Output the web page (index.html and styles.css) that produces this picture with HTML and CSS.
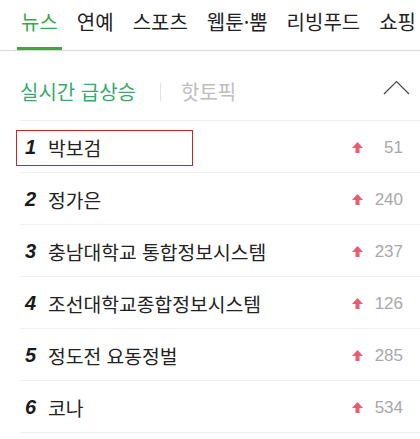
FILE: index.html
```html
<!DOCTYPE html>
<html lang="ko">
<head>
<meta charset="utf-8">
<link rel="stylesheet" href="styles.css">
</head>
<body>
<nav class="tabs">
  <span class="tab active">뉴스</span>
  <span class="tab">연예</span>
  <span class="tab">스포츠</span>
  <span class="tab">웹툰·뿜</span>
  <span class="tab">리빙푸드</span>
  <span class="tab">쇼핑</span>
</nav>
<section class="panel">
  <header class="panel-head">
    <span class="head-on">실시간 급상승</span>
    <span class="head-sep"></span>
    <span class="head-off">핫토픽</span>
    <svg class="chevron" width="28" height="15" viewBox="0 0 28 15"><polyline points="1,14 13.5,1.5 26,14" fill="none" stroke="#444" stroke-width="1.2"/></svg>
  </header>
  <ol class="rank-list">
    <li class="row first"><span class="rank">1</span><span class="name">박보검</span><svg class="up" width="11" height="11" viewBox="0 0 11 11"><polygon points="5.5,0 11,6 7.5,6 7.5,11 3.5,11 3.5,6 0,6"/></svg><span class="count">51</span><span class="highlight"></span></li>
    <li class="row"><span class="rank">2</span><span class="name">정가은</span><svg class="up" width="11" height="11" viewBox="0 0 11 11"><polygon points="5.5,0 11,6 7.5,6 7.5,11 3.5,11 3.5,6 0,6"/></svg><span class="count">240</span></li>
    <li class="row"><span class="rank">3</span><span class="name">충남대학교 통합정보시스템</span><svg class="up" width="11" height="11" viewBox="0 0 11 11"><polygon points="5.5,0 11,6 7.5,6 7.5,11 3.5,11 3.5,6 0,6"/></svg><span class="count">237</span></li>
    <li class="row"><span class="rank">4</span><span class="name">조선대학교종합정보시스템</span><svg class="up" width="11" height="11" viewBox="0 0 11 11"><polygon points="5.5,0 11,6 7.5,6 7.5,11 3.5,11 3.5,6 0,6"/></svg><span class="count">126</span></li>
    <li class="row"><span class="rank">5</span><span class="name">정도전 요동정벌</span><svg class="up" width="11" height="11" viewBox="0 0 11 11"><polygon points="5.5,0 11,6 7.5,6 7.5,11 3.5,11 3.5,6 0,6"/></svg><span class="count">285</span></li>
    <li class="row"><span class="rank">6</span><span class="name">코나</span><svg class="up" width="11" height="11" viewBox="0 0 11 11"><polygon points="5.5,0 11,6 7.5,6 7.5,11 3.5,11 3.5,6 0,6"/></svg><span class="count">534</span></li>
  </ol>
</section>
</body>
</html>
```
FILE: styles.css
```css
html, body {
  margin: 0;
  padding: 0;
  background: #fff;
  font-family: "Noto Sans CJK KR", "Noto Sans", sans-serif;
  overflow: hidden;
}
.tabs {
  display: flex;
  gap: 11px;
  padding-left: 17px;
  height: 50px;
  border-bottom: 1px solid #d6d6d6;
  white-space: nowrap;
  overflow: hidden;
}
.tab {
  padding: 0 4px;
  font-size: 20px;
  line-height: 44px;
  color: #222;
  border-bottom: 3px solid transparent;
  height: 47px;
}
.tab.active {
  color: #3aa844;
  border-bottom-color: #3aa844;
}
.panel-head {
  display: flex;
  align-items: center;
  height: 70px;
  margin-left: 20px;
  border-bottom: 1px solid #eceef0;
  padding-top: 12px;
  box-sizing: border-box;
}
.head-on {
  font-size: 20px;
  color: #39a96c;
  line-height: 22px;
}
.head-sep {
  width: 1px;
  height: 18px;
  background: #e3e3e3;
  margin: 0 20px 0 24px;
}
.head-off {
  font-size: 20px;
  color: #bdbdbd;
  line-height: 22px;
}
.chevron {
  margin-left: auto;
  margin-right: 9px;
  margin-top: -8px;
}
.rank-list {
  list-style: none;
  margin: 0 0 0 20px;
  padding: 0;
}
.row {
  position: relative;
  display: flex;
  align-items: center;
  height: 52px;
  border-bottom: 1px solid #eef0f3;
  box-sizing: border-box;
  padding: 2px 17px 0 5px;
}
.rank {
  font-family: "Liberation Sans", Arial, sans-serif;
  font-weight: bold;
  font-style: italic;
  font-size: 20px;
  color: #1a1a1a;
  width: 23px;
}
.name {
  font-size: 19.3px;
  color: #222;
  line-height: 22px;
  flex: 1;
}
.up {
  fill: #ec5b72;
  margin-right: 9px;
}
.count {
  font-family: "Liberation Sans", Arial, sans-serif;
  font-size: 17px;
  color: #a8a8a8;
  width: 31px;
  text-align: right;
}
.highlight {
  position: absolute;
  left: -4px;
  top: 9px;
  width: 177px;
  height: 36px;
  border: 1.5px solid #c8252f;
  box-sizing: border-box;
}
```
